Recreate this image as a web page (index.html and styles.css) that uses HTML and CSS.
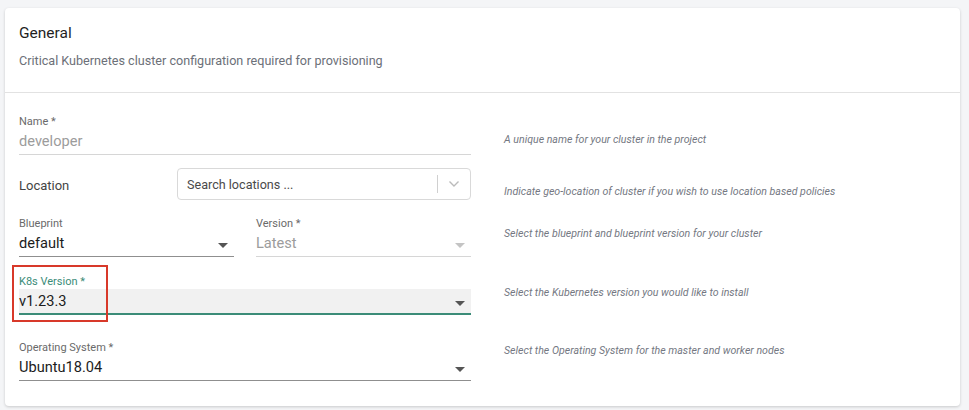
FILE: index.html
```html
<!DOCTYPE html>
<html lang="en">
<head>
  <meta charset="UTF-8" />
  <meta name="viewport" content="width=device-width, initial-scale=1.0"/>
  <title>Cluster - General</title>
  <link rel="stylesheet" href="styles.css">
</head>
<body>

<div class="card">
  <div class="card-header">
    <div class="title">General</div>
    <div class="subtitle">Critical Kubernetes cluster configuration required for provisioning</div>
  </div>

  <div class="card-body">
    <!-- Name -->
    <div class="row row-name">
      <div class="field full">
        <div class="label">Name *</div>
        <div class="input disabled">developer</div>
      </div>
      <div class="hint">A unique name for your cluster in the project</div>
    </div>

    <!-- Location -->
    <div class="row row-location">
      <div class="location">
        <div class="location-label">Location</div>
        <div class="search">
          <span class="placeholder">Search locations ...</span>
          <span class="sep"></span>
          <svg class="chevron" width="12" height="8" viewBox="0 0 12 8"><path d="M1.5 1.5 L6 6 L10.5 1.5" fill="none" stroke="#bbb" stroke-width="1.4"/></svg>
        </div>
      </div>
      <div class="hint">Indicate geo-location of cluster if you wish to use location based policies</div>
    </div>

    <!-- Blueprint -->
    <div class="row row-blueprint">
      <div class="pair">
        <div class="field">
          <div class="label">Blueprint</div>
          <div class="input select">default<span class="caret"></span></div>
        </div>
        <div class="field">
          <div class="label">Version *</div>
          <div class="input select disabled">Latest<span class="caret light"></span></div>
        </div>
      </div>
      <div class="hint">Select the blueprint and blueprint version for your cluster</div>
    </div>

    <!-- K8s version -->
    <div class="row row-k8s">
      <div class="field full focused">
        <div class="label">K8s Version *</div>
        <div class="input select">v1.23.3<span class="caret"></span></div>
        <div class="highlight"></div>
      </div>
      <div class="hint">Select the Kubernetes version you would like to install</div>
    </div>

    <!-- OS -->
    <div class="row row-os">
      <div class="field full">
        <div class="label">Operating System *</div>
        <div class="input select">Ubuntu18.04<span class="caret"></span></div>
      </div>
      <div class="hint">Select the Operating System for the master and worker nodes</div>
    </div>
  </div>
</div>

</body>
</html>
```

FILE: styles.css
```css
body {
  margin: 0;
  padding: 8px 9px 4px 5px;
  background: #f4f5f7;
  font-family: Roboto, "Liberation Sans", sans-serif;
  color: #222;
}
.card {
  background: #fff;
  border-radius: 4px;
  box-shadow: 0 1px 3px rgba(0, 0, 0, 0.18);
}
.card-header {
  padding: 15px 14px 22px;
  border-bottom: 1px solid #e2e2e2;
}
.title {
  font-size: 15.5px;
  line-height: 20px;
  color: #1f1f1f;
}
.subtitle {
  margin-top: 9px;
  font-size: 12.6px;
  line-height: 18px;
  color: #6c7078;
}
.card-body {
  padding: 22px 14px 25px;
}

.row {
  display: flex;
}
.row-location { margin-top: 13px; }
.row-blueprint { margin-top: 17px; }
.row-k8s { margin-top: 18px; }
.row-os { margin-top: 26px; }

.hint {
  margin-left: 33px;
  font-size: 10.6px;
  line-height: 14px;
  font-style: italic;
  color: #747882;
}
.row-name .hint { padding-top: 18px; }
.row-location .hint { padding-top: 17px; }
.row-blueprint .hint { padding-top: 10px; }
.row-k8s .hint { padding-top: 11px; }
.row-os .hint { padding-top: 3px; }

.field {
  position: relative;
  width: 215px;
}
.field.full { width: 452px; }
.pair {
  display: flex;
  gap: 22px;
  width: 452px;
}
.label {
  font-size: 11px;
  line-height: 14px;
  color: #6a6a6a;
}
.input {
  position: relative;
  height: 25px;
  line-height: 25px;
  font-size: 14.6px;
  color: #1c1c1c;
  border-bottom: 1px solid #8f8f8f;
}
.input.disabled {
  color: #9c9c9c;
  border-bottom-color: #d6d6d6;
}
.caret {
  position: absolute;
  right: 6px;
  top: 12px;
  border-left: 5px solid transparent;
  border-right: 5px solid transparent;
  border-top: 5px solid #555;
}
.caret.light { border-top-color: #c4c4c4; }

.focused .label { color: #3b8c78; }
.focused .input {
  background: #f1f1f1;
  border-bottom: 2px solid #3b8c78;
  height: 24px;
}
.highlight {
  position: absolute;
  left: -7px;
  top: -10px;
  width: 92px;
  height: 53px;
  border: 2px solid #d8392a;
}

.location {
  display: flex;
  align-items: center;
  width: 452px;
}
.location-label {
  width: 158px;
  font-size: 13px;
  color: #444;
  padding-top: 2px;
}
.search {
  flex: 1;
  display: flex;
  align-items: center;
  height: 30px;
  border: 1px solid #d9d9d9;
  border-radius: 4px;
  padding: 0 10px 0 9px;
}
.placeholder {
  flex: 1;
  font-size: 12.6px;
  color: #4a4a4a;
}
.sep {
  width: 1px;
  height: 18px;
  background: #d0d0d0;
  margin-right: 10px;
}
.chevron { display: block; }
```
